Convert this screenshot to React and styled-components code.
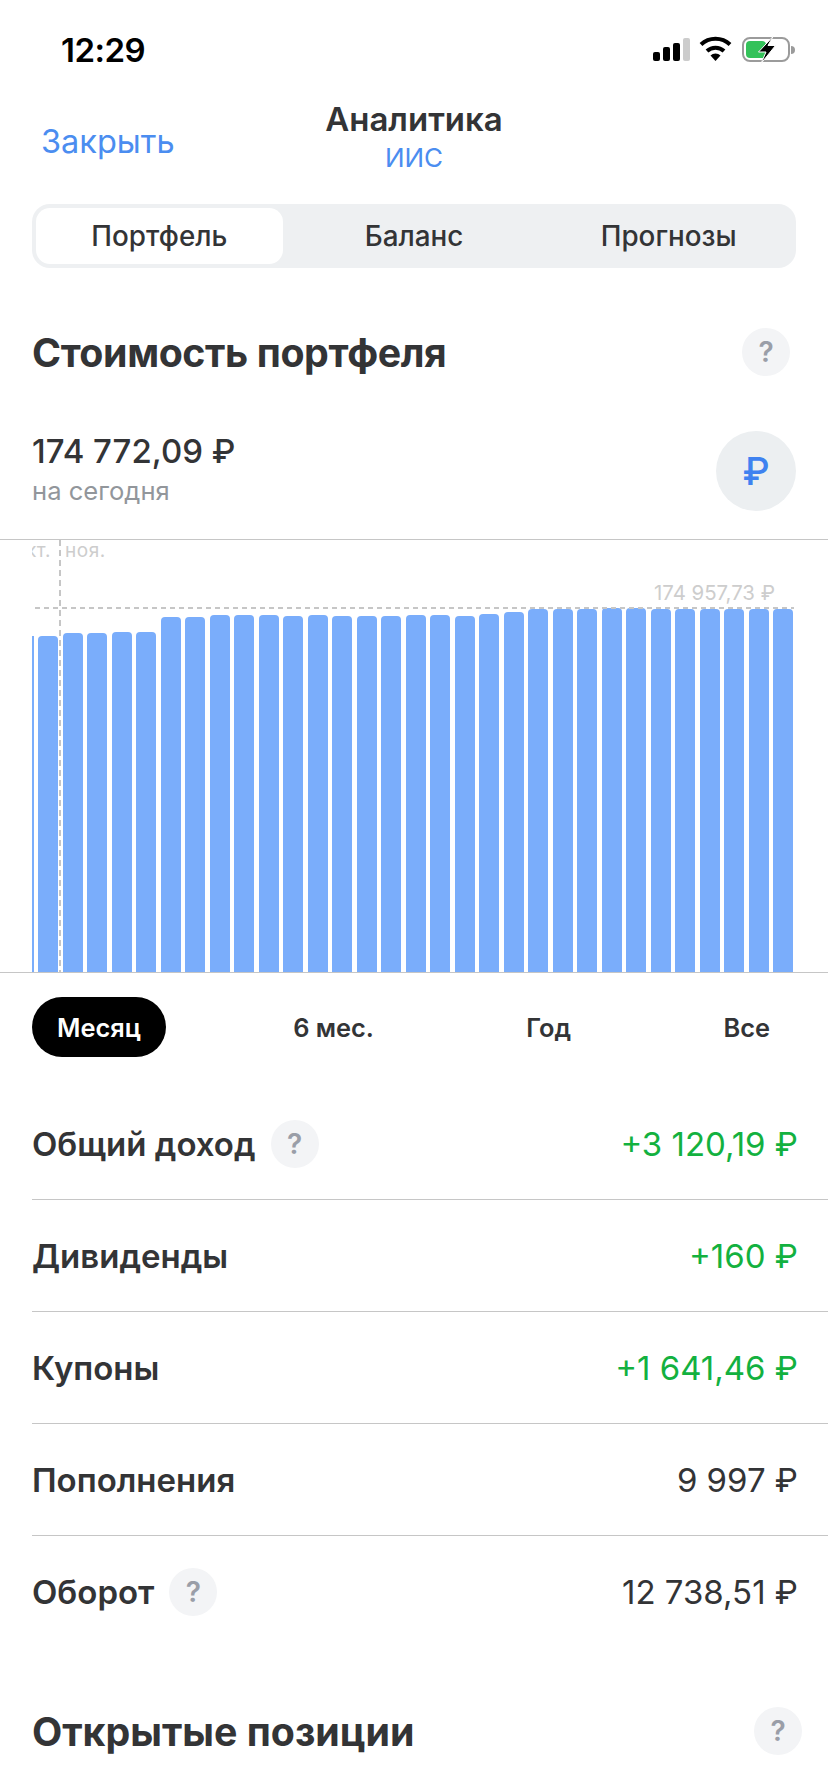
import styled, { createGlobalStyle } from "styled-components";

const GlobalStyle = createGlobalStyle`
  html, body {
    margin: 0;
    padding: 0;
    background: #fff;
  }
  * {
    box-sizing: border-box;
  }
`;

const Page = styled.div`
  width: 828px;
  height: 1792px;
  overflow: hidden;
  background: #fff;
  color: #333436;
  font-family: Inter, "Noto Sans", sans-serif;
`;

const StatusBar = styled.div`
  height: 100px;
  display: flex;
  align-items: center;
  justify-content: space-between;
  padding: 0 33px 0 61px;
`;

const Time = styled.div`
  font-size: 33px;
  font-weight: 600;
  color: #000;
  letter-spacing: -0.5px;
`;

const StatusIcons = styled.svg`
  display: block;
`;

const Nav = styled.div`
  height: 104px;
  display: grid;
  grid-template-columns: 1fr auto 1fr;
  align-items: center;
  padding: 0 41px 31px;
`;

const CloseLink = styled.div`
  font-size: 32.5px;
  color: #4b8df0;
  padding-top: 5px;
`;

const NavTitle = styled.div`
  display: flex;
  flex-direction: column;
  align-items: center;
`;

const NavHeading = styled.div`
  font-size: 33px;
  font-weight: 600;
  line-height: 38px;
`;

const NavSub = styled.div`
  font-size: 26px;
  line-height: 40px;
  color: #4b8df0;
`;

const Segments = styled.div`
  margin: 0 32px;
  height: 64px;
  padding: 4px;
  display: grid;
  grid-template-columns: repeat(3, 1fr);
  gap: 8px;
  background: #eef0f2;
  border-radius: 18px;
`;

const Segment = styled.div`
  display: flex;
  align-items: center;
  justify-content: center;
  font-size: 27.8px;
  font-weight: 500;
  border-radius: 14px;
  background: ${(p) => (p.$active ? "#fff" : "transparent")};
`;

const SectionHead = styled.div`
  display: flex;
  align-items: center;
  justify-content: space-between;
  padding: 0 ${(p) => p.$right}px 0 32px;
  height: 48px;
  margin-top: ${(p) => p.$top}px;
`;

const SectionTitle = styled.h2`
  margin: 0;
  font-size: 39.3px;
  font-weight: 700;
  letter-spacing: ${(p) => p.$spacing}px;
`;

const Hint = styled.div`
  width: 48px;
  height: 48px;
  flex: none;
  border-radius: 50%;
  background: #f3f4f6;
  color: #9a9ea8;
  font-size: 28px;
  font-weight: 600;
  display: flex;
  align-items: center;
  justify-content: center;
`;

const Summary = styled.div`
  display: flex;
  align-items: center;
  justify-content: space-between;
  padding: 0 32px;
  height: 80px;
  margin-top: 55px;
`;

const SummaryText = styled.div`
  padding-bottom: 4px;
`;

const SummaryValue = styled.div`
  font-size: 33px;
  font-weight: 500;
  line-height: 38px;
`;

const SummaryNote = styled.div`
  font-size: 25.6px;
  color: #92969b;
  line-height: 30px;
  margin-top: 6px;
`;

const CurrencyButton = styled.div`
  width: 80px;
  height: 80px;
  border-radius: 50%;
  background: #eceff1;
  color: #3f82f0;
  font-size: 38px;
  font-weight: 500;
  display: flex;
  align-items: center;
  justify-content: center;
`;

const Chart = styled.div`
  position: relative;
  margin-top: 28px;
  height: 434px;
  border-top: 1px solid #c6c6c6;
  border-bottom: 1px solid #c6c6c6;
  padding-left: 32px;
`;

const Plot = styled.div`
  height: 100%;
  display: flex;
  align-items: flex-end;
  gap: 4.5px;
`;

const Bar = styled.div`
  flex: none;
  width: ${(p) => (p.$sliver ? "1.5px" : "20px")};
  background: #7aadfb;
  border-radius: ${(p) => (p.$sliver ? "0" : "4px 4px 0 0")};
`;

const MonthLabels = styled.div`
  position: absolute;
  left: 32px;
  top: 0;
  width: 100px;
  height: 28px;
  overflow: hidden;
`;

const MonthLabel = styled.span`
  position: absolute;
  top: -1px;
  left: ${(p) => p.$left}px;
  font-size: 19px;
  color: #cdcdcd;
  white-space: nowrap;
  letter-spacing: 0.5px;
`;

const DashH = styled.div`
  position: absolute;
  left: 35px;
  right: 34px;
  top: 67px;
  height: 2px;
  background: repeating-linear-gradient(90deg, #c6c6c6 0 5px, transparent 5px 9px);
`;

const DashV = styled.div`
  position: absolute;
  left: 59px;
  top: 0;
  bottom: 0;
  width: 2px;
  background: repeating-linear-gradient(180deg, #c6c6c6 0 6px, transparent 6px 10px);
`;

const MaxLabel = styled.div`
  position: absolute;
  right: 53px;
  top: 40px;
  font-size: 20.4px;
  color: #cdcdcd;
`;

const Periods = styled.div`
  display: flex;
  justify-content: space-between;
  padding: 0 33px 0 32px;
  margin-top: 24px;
`;

const Period = styled.div`
  height: 60px;
  padding: 0 25px;
  display: flex;
  align-items: center;
  border-radius: 30px;
  font-size: 25.4px;
  font-weight: 600;
  background: ${(p) => (p.$active ? "#000" : "transparent")};
  color: ${(p) => (p.$active ? "#fff" : "#333436")};
`;

const Stats = styled.div`
  margin: 31px 0 0 32px;
`;

const StatRow = styled.div`
  height: 112px;
  display: flex;
  align-items: center;
  justify-content: space-between;
  padding-right: 30px;
  border-bottom: ${(p) => (p.$last ? "none" : "1px solid #c6c6c6")};
`;

const StatLabel = styled.div`
  display: flex;
  align-items: center;
  gap: 15px;
  font-size: 33px;
  font-weight: 600;
`;

const StatValue = styled.div`
  font-size: 33px;
  color: ${(p) => (p.$gain ? "#13b13f" : "#333436")};
`;

const BAR_TOPS = [
  636, 633, 633, 632, 632, 617, 617, 615, 615, 615, 616, 615, 616, 616, 616, 615,
  615, 616, 614, 612, 609, 609, 609, 608, 608, 609, 609, 609, 609, 609, 609,
];

const BASELINE = 972;

const STATS = [
  { label: "Общий доход", value: "+3 120,19 ₽", gain: true, hint: true },
  { label: "Дивиденды", value: "+160 ₽", gain: true },
  { label: "Купоны", value: "+1 641,46 ₽", gain: true },
  { label: "Пополнения", value: "9 997 ₽" },
  { label: "Оборот", value: "12 738,51 ₽", hint: true, last: true },
];

function StatusGlyphs() {
  return (
    <StatusIcons width="142" height="30" viewBox="653 35 142 30">
      <rect x="653" y="52" width="7" height="9" rx="2" fill="#000" />
      <rect x="663" y="47" width="7" height="14" rx="2" fill="#000" />
      <rect x="673" y="43" width="7" height="18" rx="2" fill="#000" />
      <rect x="683" y="38" width="7" height="23" rx="2" fill="#ccc" />
      <path d="M701 44.5a21 21 0 0 1 29 0" fill="none" stroke="#000" strokeWidth="4" />
      <path d="M707 51a12.5 12.5 0 0 1 17 0" fill="none" stroke="#000" strokeWidth="4" />
      <path d="M710.5 55.5l5 5.5 5-5.5a7 7 0 0 0-10 0z" fill="#000" />
      <rect x="743" y="38" width="46" height="23" rx="7" fill="none" stroke="#9b9b9b" strokeWidth="2" />
      <rect x="746" y="41" width="20" height="17" rx="4" fill="#34c25a" />
      <path d="M791 46a4 4 0 0 1 0 8z" fill="#9b9b9b" />
      <path d="M773 36.5L758.5 52h7.5L761 63.5L775.5 45.5h-7.5z" fill="#000" stroke="#fff" strokeWidth="1" />
    </StatusIcons>
  );
}

const App = () => {
  return (
    <Page>
      <GlobalStyle />
      <StatusBar>
        <Time>12:29</Time>
        <StatusGlyphs />
      </StatusBar>
      <Nav>
        <CloseLink>Закрыть</CloseLink>
        <NavTitle>
          <NavHeading>Аналитика</NavHeading>
          <NavSub>ИИС</NavSub>
        </NavTitle>
      </Nav>
      <Segments>
        <Segment $active>Портфель</Segment>
        <Segment>Баланс</Segment>
        <Segment>Прогнозы</Segment>
      </Segments>

      <SectionHead $top={60} $right={38}>
        <SectionTitle $spacing={-0.4}>Стоимость портфеля</SectionTitle>
        <Hint>?</Hint>
      </SectionHead>

      <Summary>
        <SummaryText>
          <SummaryValue>174 772,09 ₽</SummaryValue>
          <SummaryNote>на сегодня</SummaryNote>
        </SummaryText>
        <CurrencyButton>₽</CurrencyButton>
      </Summary>

      <Chart>
        <Plot>
          <Bar $sliver style={{ height: BASELINE - BAR_TOPS[0] }} />
          {BAR_TOPS.map((top, i) => (
            <Bar key={i} style={{ height: BASELINE - top }} />
          ))}
        </Plot>
        <MonthLabels>
          <MonthLabel $left={-6}>кт.</MonthLabel>
          <MonthLabel $left={33}>ноя.</MonthLabel>
        </MonthLabels>
        <DashV />
        <DashH />
        <MaxLabel>174 957,73 ₽</MaxLabel>
      </Chart>

      <Periods>
        <Period $active>Месяц</Period>
        <Period>6 мес.</Period>
        <Period>Год</Period>
        <Period>Все</Period>
      </Periods>

      <Stats>
        {STATS.map((s) => (
          <StatRow key={s.label} $last={s.last}>
            <StatLabel>
              {s.label}
              {s.hint && <Hint>?</Hint>}
            </StatLabel>
            <StatValue $gain={s.gain}>{s.value}</StatValue>
          </StatRow>
        ))}
      </Stats>

      <SectionHead $top={59} $right={26}>
        <SectionTitle $spacing={0}>Открытые позиции</SectionTitle>
        <Hint>?</Hint>
      </SectionHead>
    </Page>
  );
};

export default App;
